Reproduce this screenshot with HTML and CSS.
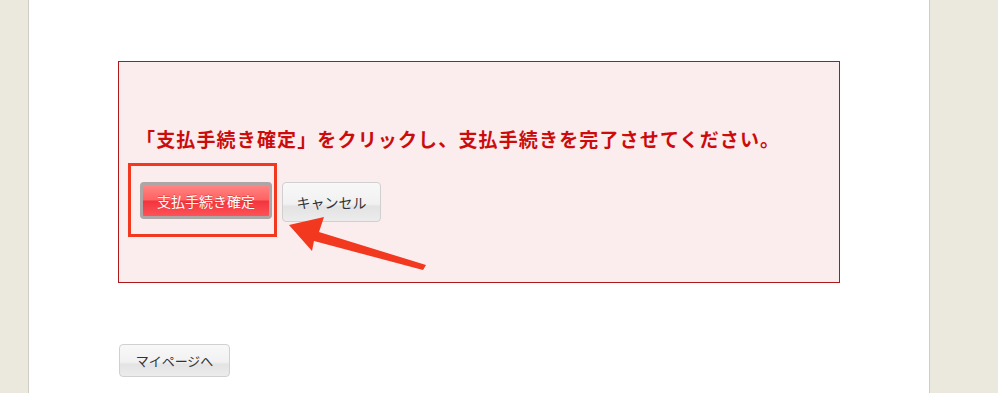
FILE: index.html
```html
<!DOCTYPE html>
<html lang="ja">
<head>
    <meta charset="UTF-8">
    <meta name="viewport" content="width=device-width, initial-scale=1.0">
    <title>支払手続き確定</title>
    <link rel="stylesheet" href="styles.css">
</head>
<body>
    <div class="page">
        <main class="content">
            <div class="notice-box">
                <p class="notice-text">「支払手続き確定」をクリックし、支払手続きを完了させてください。</p>
                <div class="notice-actions">
                    <button class="btn btn-confirm">支払手続き確定</button>
                    <button class="btn btn-plain btn-cancel">キャンセル</button>
                </div>
            </div>
            <div class="back-row">
                <button class="btn btn-plain btn-mypage">マイページへ</button>
            </div>
        </main>
    </div>

    <!-- annotation overlay -->
    <svg class="annotation" width="998" height="393" viewBox="0 0 998 393">
        <rect x="129.5" y="164.5" width="146" height="71" fill="none" stroke="#f2381f" stroke-width="3"/>
        <polygon points="289,225 324,217 319,232 426,265 423,270 314,241 312,251" fill="#f2381f"/>
    </svg>
</body>
</html>
```

FILE: styles.css
```css
body {
    margin: 0;
    padding: 0;
    background-color: #ebe8dd;
    font-family: 'Noto Sans CJK JP', 'Noto Sans', sans-serif;
    color: #333;
    overflow: hidden;
}
.page {
    display: flex;
    height: 393px;
}
.content {
    margin-left: 28px;
    width: 902px;
    height: 393px;
    background-color: #fff;
    border-left: 1px solid #cfcdc6;
    border-right: 1px solid #cfcdc6;
    padding: 61px 0 0 89px;
    box-sizing: border-box;
}
.notice-box {
    width: 722px;
    border: 1px solid #b0191a;
    background-color: #fbeded;
    padding: 64px 0 60px 17px;
    box-sizing: border-box;
    height: 222px;
}
.notice-text {
    margin: 0;
    color: #cc0c0c;
    font-size: 19px;
    font-weight: bold;
    line-height: 26px;
    letter-spacing: 1.15px;
}
.notice-actions {
    display: flex;
    align-items: flex-start;
    gap: 10px;
    margin-top: 30px;
    padding-left: 4px;
}
.btn {
    font-family: 'Noto Sans CJK JP', 'Noto Sans', sans-serif;
    font-size: 14px;
    cursor: pointer;
    padding: 0;
}
.btn-confirm {
    width: 132px;
    height: 37px;
    color: #fff;
    border: 3px solid #aca6a6;
    border-radius: 4px;
    background: linear-gradient(#ff8585, #ff6262 48%, #f2343d 52%, #ff5257);
    text-shadow: 0 -1px 0 rgba(160, 0, 0, 0.3);
}
.btn-plain {
    color: #333;
    border: 1px solid #d0d0d0;
    border-radius: 4px;
    background: linear-gradient(#f8f8f8, #f1f1f1 55%, #e3e3e3 62%, #ececec);
}
.btn-cancel {
    width: 99px;
    height: 40px;
}
.back-row {
    margin-top: 61px;
    padding-left: 1px;
}
.btn-mypage {
    width: 111px;
    height: 33px;
    font-size: 13px;
}
.annotation {
    position: absolute;
    top: 0;
    left: 0;
    pointer-events: none;
}
```
